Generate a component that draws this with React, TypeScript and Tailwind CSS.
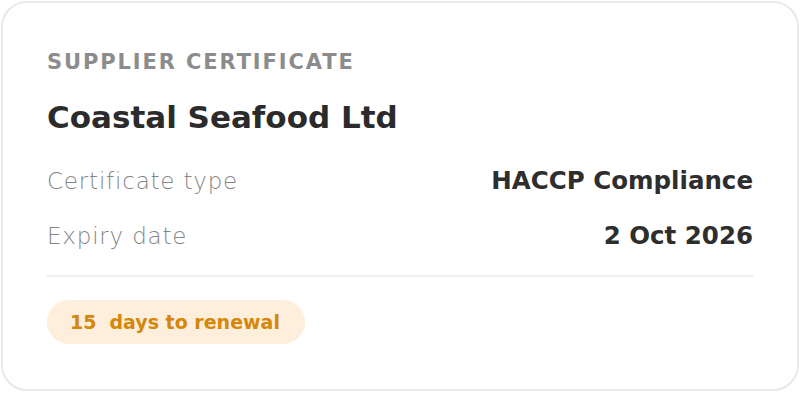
export default function App() {
  const rows = [
    { label: "Certificate type", value: "HACCP Compliance" },
    { label: "Expiry date", value: "2 Oct 2026" },
  ];

  return (
    <div className="w-[800px] h-[394px] bg-white p-px" style={{ fontFamily: "'DejaVu Sans', Inter, sans-serif" }}>
      <div className="h-[390px] rounded-[26px] border-2 border-[#e9e9e9] bg-white px-[44px] pt-[43px]">
        <div className="text-[21px] leading-[32px] font-semibold tracking-[0.09em] text-[#8c8c8c] uppercase">
          Supplier Certificate
        </div>
        <div className="mt-[19px] text-[31px] leading-[40px] font-bold text-[#2b2b2b]">
          Coastal Seafood Ltd
        </div>
        <div className="mt-[17px] flex flex-col">
          {rows.map((row) => (
            <div key={row.label} className="flex items-center justify-between h-[55px]">
              <span className="text-[23px] font-light tracking-[0.035em] text-[#858585]">{row.label}</span>
              <span className="text-[24.5px] font-bold text-[#2e2e2e]">{row.value}</span>
            </div>
          ))}
        </div>
        <div className="mt-[11px] h-[2px] bg-[#eeeeee]" />
        <div className="mt-[23px] inline-flex items-center gap-[13px] h-[44px] rounded-full bg-[#fdefdc] pl-[23px] pr-[25px] text-[19px] font-bold text-[#d4870b]">
          <span>15</span>
          <span>days to renewal</span>
        </div>
      </div>
    </div>
  );
}
